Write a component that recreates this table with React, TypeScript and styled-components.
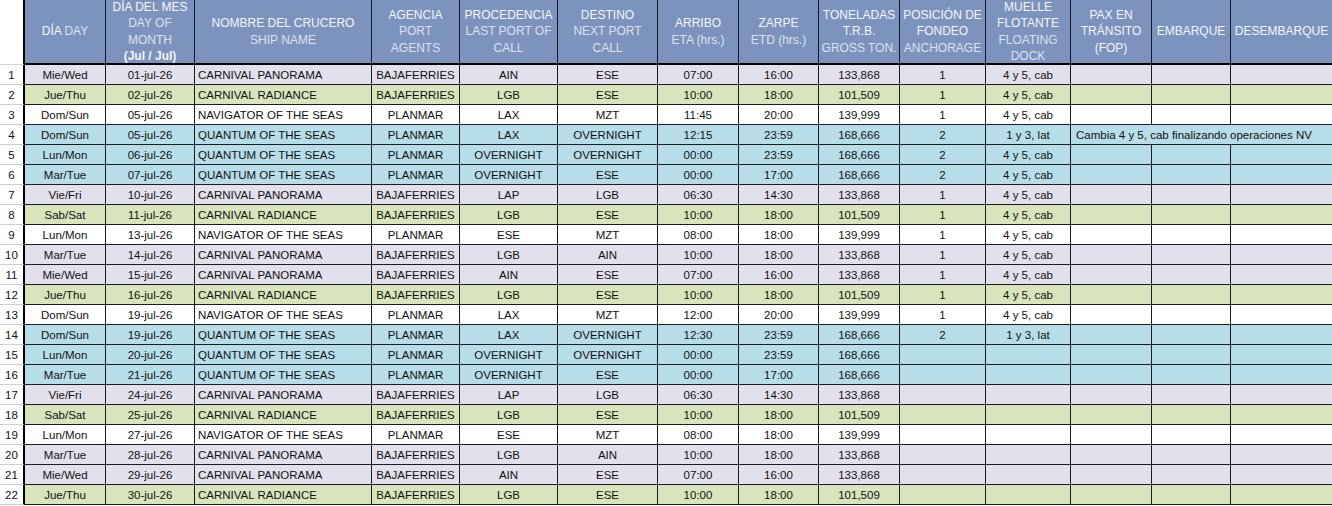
import React from 'react';
import styled, { createGlobalStyle } from 'styled-components';

const GlobalStyle = createGlobalStyle`
  html, body {
    margin: 0;
    padding: 0;
    background: #ffffff;
  }
  body {
    font-family: 'Liberation Sans', Arial, sans-serif;
  }
`;

type Tone = 'lavender' | 'green' | 'white' | 'blue';

const toneColors: Record<Tone, string> = {
  lavender: '#e3e0ed',
  green: '#d8e4bc',
  white: '#ffffff',
  blue: '#b7dde8',
};

const Sheet = styled.table`
  border-collapse: separate;
  border-spacing: 0;
  table-layout: fixed;
  width: 1332px;
  font-family: 'Liberation Sans', Arial, sans-serif;
`;

const CornerCell = styled.th`
  box-sizing: border-box;
  height: 65px;
  background: #ffffff;
  border-right: 2px solid #000;
  border-bottom: 1px solid #d4d4d4;
  padding: 0;
`;

const HeadCell = styled.th<{ $last?: boolean }>`
  box-sizing: border-box;
  height: 65px;
  padding: 0 2px;
  background: #7b93bd;
  color: #dbe2ee;
  font-size: 12px;
  font-weight: normal;
  line-height: 16.5px;
  text-align: center;
  vertical-align: middle;
  border-right: ${p => (p.$last ? 'none' : '1px solid #141826')};
  border-bottom: 2px solid #000;
  overflow: hidden;
  white-space: nowrap;
`;

const HeadInner = styled.div`
  max-height: 63px;
  display: flex;
  flex-direction: column;
  justify-content: center;
  overflow: hidden;
`;

// Spanish captions read a shade brighter than the English ones
const Es = styled.span`
  color: #f4f6fb;
`;

const Bold = styled.span`
  color: #f4f6fb;
  font-weight: bold;
`;

const RowNum = styled.td`
  box-sizing: border-box;
  height: 20px;
  padding: 0;
  background: #ffffff;
  color: #111;
  font-size: 11.5px;
  text-align: center;
  border-right: 2px solid #000;
  border-bottom: 1px solid #cfcfcf;
`;

const Cell = styled.td<{ $tone: Tone; $align?: 'left' | 'center'; $last?: boolean }>`
  box-sizing: border-box;
  height: 20px;
  padding: ${p => (p.$align === 'left' ? '0 0 0 3px' : '0 1px')};
  background: ${p => toneColors[p.$tone]};
  color: #111;
  font-size: 11.5px;
  text-align: ${p => p.$align ?? 'center'};
  vertical-align: middle;
  white-space: nowrap;
  overflow: hidden;
  border-right: ${p => (p.$last ? 'none' : '1px solid #1c1c1c')};
  border-bottom: 1px solid #1c1c1c;
`;

const NoteCell = styled(Cell)`
  padding-left: 5px;
  text-align: left;
  overflow: visible;
`;

const widths = [25, 81, 89, 177, 88, 98, 100, 81, 80, 81, 86, 85, 81, 79, 101];

const ships: Record<string, { name: string; tone: Tone; agent: string }> = {
  pan: { name: 'CARNIVAL PANORAMA', tone: 'lavender', agent: 'BAJAFERRIES' },
  rad: { name: 'CARNIVAL RADIANCE', tone: 'green', agent: 'BAJAFERRIES' },
  nav: { name: 'NAVIGATOR OF THE SEAS', tone: 'white', agent: 'PLANMAR' },
  qua: { name: 'QUANTUM OF THE SEAS', tone: 'blue', agent: 'PLANMAR' },
};

const tonnage: Record<string, string> = {
  pan: '133,868',
  rad: '101,509',
  nav: '139,999',
  qua: '168,666',
};

type Call = {
  day: string;
  date: string;
  ship: keyof typeof ships;
  from: string;
  to: string;
  eta: string;
  etd: string;
  pos?: string;
  dock?: string;
  note?: string;
};

const calls: Call[] = [
  { day: 'Mie/Wed', date: '01-jul-26', ship: 'pan', from: 'AIN', to: 'ESE', eta: '07:00', etd: '16:00', pos: '1', dock: '4 y 5, cab' },
  { day: 'Jue/Thu', date: '02-jul-26', ship: 'rad', from: 'LGB', to: 'ESE', eta: '10:00', etd: '18:00', pos: '1', dock: '4 y 5, cab' },
  { day: 'Dom/Sun', date: '05-jul-26', ship: 'nav', from: 'LAX', to: 'MZT', eta: '11:45', etd: '20:00', pos: '1', dock: '4 y 5, cab' },
  { day: 'Dom/Sun', date: '05-jul-26', ship: 'qua', from: 'LAX', to: 'OVERNIGHT', eta: '12:15', etd: '23:59', pos: '2', dock: '1 y 3, lat', note: 'Cambia 4 y 5, cab finalizando operaciones NV' },
  { day: 'Lun/Mon', date: '06-jul-26', ship: 'qua', from: 'OVERNIGHT', to: 'OVERNIGHT', eta: '00:00', etd: '23:59', pos: '2', dock: '4 y 5, cab' },
  { day: 'Mar/Tue', date: '07-jul-26', ship: 'qua', from: 'OVERNIGHT', to: 'ESE', eta: '00:00', etd: '17:00', pos: '2', dock: '4 y 5, cab' },
  { day: 'Vie/Fri', date: '10-jul-26', ship: 'pan', from: 'LAP', to: 'LGB', eta: '06:30', etd: '14:30', pos: '1', dock: '4 y 5, cab' },
  { day: 'Sab/Sat', date: '11-jul-26', ship: 'rad', from: 'LGB', to: 'ESE', eta: '10:00', etd: '18:00', pos: '1', dock: '4 y 5, cab' },
  { day: 'Lun/Mon', date: '13-jul-26', ship: 'nav', from: 'ESE', to: 'MZT', eta: '08:00', etd: '18:00', pos: '1', dock: '4 y 5, cab' },
  { day: 'Mar/Tue', date: '14-jul-26', ship: 'pan', from: 'LGB', to: 'AIN', eta: '10:00', etd: '18:00', pos: '1', dock: '4 y 5, cab' },
  { day: 'Mie/Wed', date: '15-jul-26', ship: 'pan', from: 'AIN', to: 'ESE', eta: '07:00', etd: '16:00', pos: '1', dock: '4 y 5, cab' },
  { day: 'Jue/Thu', date: '16-jul-26', ship: 'rad', from: 'LGB', to: 'ESE', eta: '10:00', etd: '18:00', pos: '1', dock: '4 y 5, cab' },
  { day: 'Dom/Sun', date: '19-jul-26', ship: 'nav', from: 'LAX', to: 'MZT', eta: '12:00', etd: '20:00', pos: '1', dock: '4 y 5, cab' },
  { day: 'Dom/Sun', date: '19-jul-26', ship: 'qua', from: 'LAX', to: 'OVERNIGHT', eta: '12:30', etd: '23:59', pos: '2', dock: '1 y 3, lat' },
  { day: 'Lun/Mon', date: '20-jul-26', ship: 'qua', from: 'OVERNIGHT', to: 'OVERNIGHT', eta: '00:00', etd: '23:59' },
  { day: 'Mar/Tue', date: '21-jul-26', ship: 'qua', from: 'OVERNIGHT', to: 'ESE', eta: '00:00', etd: '17:00' },
  { day: 'Vie/Fri', date: '24-jul-26', ship: 'pan', from: 'LAP', to: 'LGB', eta: '06:30', etd: '14:30' },
  { day: 'Sab/Sat', date: '25-jul-26', ship: 'rad', from: 'LGB', to: 'ESE', eta: '10:00', etd: '18:00' },
  { day: 'Lun/Mon', date: '27-jul-26', ship: 'nav', from: 'ESE', to: 'MZT', eta: '08:00', etd: '18:00' },
  { day: 'Mar/Tue', date: '28-jul-26', ship: 'pan', from: 'LGB', to: 'AIN', eta: '10:00', etd: '18:00' },
  { day: 'Mie/Wed', date: '29-jul-26', ship: 'pan', from: 'AIN', to: 'ESE', eta: '07:00', etd: '16:00' },
  { day: 'Jue/Thu', date: '30-jul-26', ship: 'rad', from: 'LGB', to: 'ESE', eta: '10:00', etd: '18:00' },
];

const headers: React.ReactNode[] = [
  <><Es>DÍA</Es> DAY</>,
  <><Es>DÍA DEL MES</Es><br />DAY OF<br />MONTH<br /><Bold>(Jul / Jul)</Bold></>,
  <><Es>NOMBRE DEL CRUCERO</Es><br />SHIP NAME</>,
  <><Es>AGENCIA</Es><br />PORT<br />AGENTS</>,
  <><Es>PROCEDENCIA</Es><br />LAST PORT OF<br />CALL</>,
  <><Es>DESTINO</Es><br />NEXT PORT<br />CALL</>,
  <><Es>ARRIBO</Es><br />ETA (hrs.)</>,
  <><Es>ZARPE</Es><br />ETD (hrs.)</>,
  <><Es>TONELADAS</Es><br /><Es>T.R.B.</Es><br />GROSS TON.</>,
  <><Es>POSICIÓN DE</Es><br /><Es>FONDEO</Es><br />ANCHORAGE</>,
  <><Es>MUELLE</Es><br /><Es>FLOTANTE</Es><br />FLOATING<br />DOCK</>,
  <><Es>PAX EN</Es><br /><Es>TRÁNSITO</Es><br /><Es>(FOP)</Es></>,
  <Es>EMBARQUE</Es>,
  <Es>DESEMBARQUE</Es>,
];

export default function App() {
  return (
    <>
      <GlobalStyle />
      <Sheet>
        <colgroup>
          {widths.map((w, i) => (
            <col key={i} style={{ width: w }} />
          ))}
        </colgroup>
        <thead>
          <tr>
            <CornerCell />
            {headers.map((h, i) => (
              <HeadCell key={i} $last={i === headers.length - 1}>
                <HeadInner>
                  <div>{h}</div>
                </HeadInner>
              </HeadCell>
            ))}
          </tr>
        </thead>
        <tbody>
          {calls.map((c, i) => {
            const ship = ships[c.ship];
            const tone = ship.tone;
            return (
              <tr key={i}>
                <RowNum>{i + 1}</RowNum>
                <Cell $tone={tone}>{c.day}</Cell>
                <Cell $tone={tone}>{c.date}</Cell>
                <Cell $tone={tone} $align="left">{ship.name}</Cell>
                <Cell $tone={tone}>{ship.agent}</Cell>
                <Cell $tone={tone}>{c.from}</Cell>
                <Cell $tone={tone}>{c.to}</Cell>
                <Cell $tone={tone}>{c.eta}</Cell>
                <Cell $tone={tone}>{c.etd}</Cell>
                <Cell $tone={tone}>{tonnage[c.ship]}</Cell>
                <Cell $tone={tone}>{c.pos ?? ''}</Cell>
                <Cell $tone={tone}>{c.dock ?? ''}</Cell>
                {c.note ? (
                  <NoteCell $tone={tone} colSpan={3} $last>{c.note}</NoteCell>
                ) : (
                  <>
                    <Cell $tone={tone} />
                    <Cell $tone={tone} />
                    <Cell $tone={tone} $last />
                  </>
                )}
              </tr>
            );
          })}
        </tbody>
      </Sheet>
    </>
  );
}
